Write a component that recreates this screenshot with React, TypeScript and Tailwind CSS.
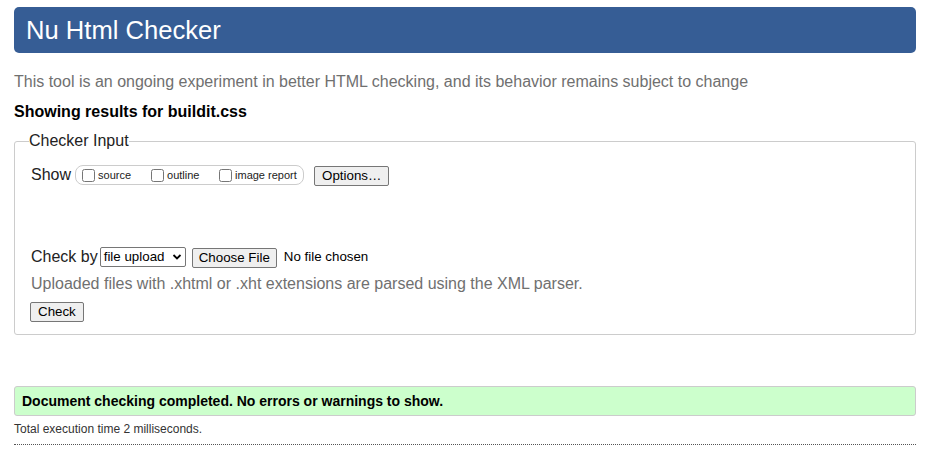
import React from 'react';

const Checkbox = ({ label }: { label: string }) => (
  <label className="flex items-center">
    <input type="checkbox" className="w-[13px] h-[13px] m-0" />
    <span className="ml-[3px] text-[11px] leading-none">{label}</span>
  </label>
);

const NativeButton = ({ children, tight }: { children: React.ReactNode; tight?: boolean }) => (
  <button
    className={`h-[20px] ${tight ? 'px-[6px]' : 'px-[7px]'} border border-[#767676] rounded-[2px] bg-[#efefef] text-[13.33px] leading-none text-black`}
  >
    {children}
  </button>
);

export default function App() {
  return (
    <div className="px-[14px] pt-[7px] text-[#222] font-['Liberation_Sans',Arial,sans-serif]">
      <header className="h-[46px] flex items-center pl-[12px] rounded-[5px] bg-[#365d95]">
        <h1 className="text-[25.6px] text-white leading-none mt-[1px]">Nu Html Checker</h1>
      </header>

      <p className="mt-[20px] text-[16px] leading-[18px] text-[#707070]">
        This tool is an ongoing experiment in better HTML checking, and its behavior remains subject to change
      </p>
      <p className="mt-[12px] text-[16px] leading-[18px] font-bold text-black">Showing results for buildit.css</p>

      <fieldset className="mt-[11px] border border-[#ccc] rounded-[3px] px-[14px] pb-[11px]">
        <legend className="text-[16px] leading-[18px] px-[0px]">Checker Input</legend>

        <div className="pl-[2px] mt-[15px] flex items-center h-[20px]">
          <span className="text-[16px]">Show</span>
          <div className="ml-[4px] h-[20px] w-[229px] border border-[#ccc] rounded-[8px] flex items-center pl-[6px]">
            <div className="w-[69px]"><Checkbox label="source" /></div>
            <div className="w-[68px]"><Checkbox label="outline" /></div>
            <Checkbox label="image report" />
          </div>
          <div className="ml-[10px]"><NativeButton>Options…</NativeButton></div>
        </div>

        <div className="pl-[2px] mt-[62px] flex items-center h-[20px]">
          <span className="text-[16px]">Check by</span>
          <div className="ml-[2px] h-[20px] w-[86px] border border-[#767676] rounded-[2px] bg-white flex items-center justify-between pl-[3px] pr-[3px] text-[13.33px] text-black">
            <span>file upload</span>
            <svg width="10" height="10" viewBox="0 0 10 10">
              <path d="M1.5 3 L5 6.5 L8.5 3" stroke="black" strokeWidth="1.8" fill="none" />
            </svg>
          </div>
          <div className="ml-[6px]"><NativeButton tight>Choose File</NativeButton></div>
          <span className="ml-[7px] text-[13.33px] text-black">No file chosen</span>
        </div>

        <p className="pl-[2px] mt-[8px] text-[16px] leading-[18px] text-[#707070]">
          Uploaded files with .xhtml or .xht extensions are parsed using the XML parser.
        </p>

        <div className="pl-[1px] mt-[6px]"><NativeButton>Check</NativeButton></div>
      </fieldset>

      <div className="mt-[51px] h-[30px] flex items-center pl-[7px] border border-[#ccc] rounded-[3px] bg-[#ccffcc]">
        <p className="text-[14px] font-bold text-black">Document checking completed. No errors or warnings to show.</p>
      </div>
      <p className="mt-[6px] text-[12px] leading-[14px] text-[#333]">Total execution time 2 milliseconds.</p>
      <div className="mt-[8px] border-b border-dotted border-[#555]" />
    </div>
  );
}
